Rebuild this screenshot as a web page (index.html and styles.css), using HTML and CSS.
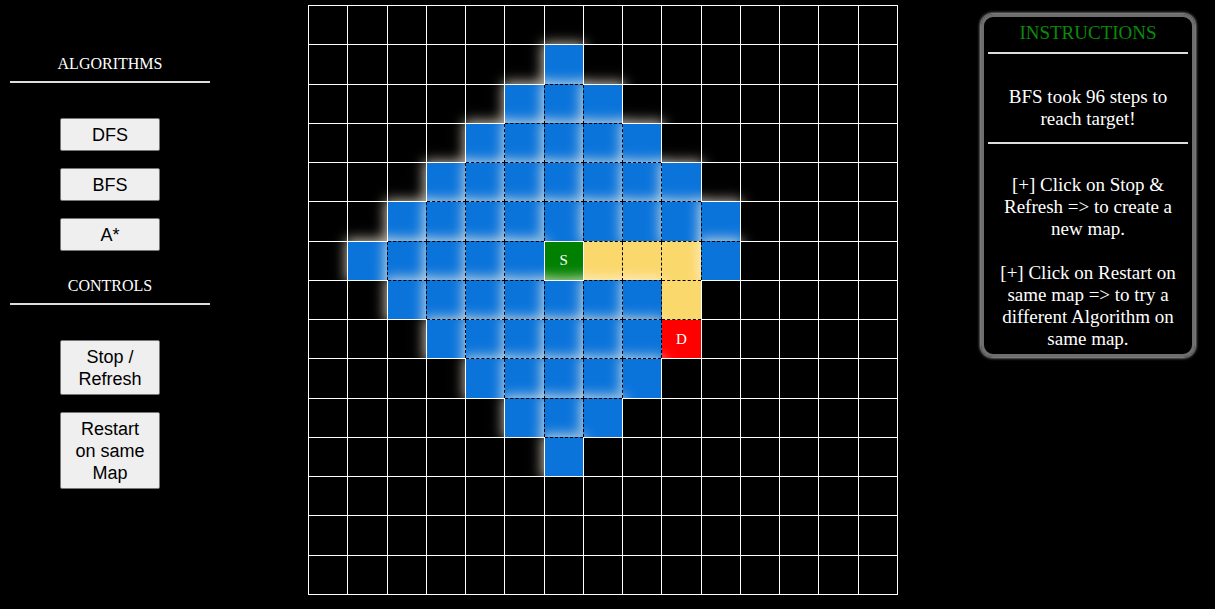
FILE: index.html
```html
<!DOCTYPE html>
<html>
<head>
<meta charset="utf-8">
<title>Pathfinding Visualizer</title>
<link rel="stylesheet" href="styles.css">
</head>
<body>
<div class="page">
  <aside class="side">
    <div class="side-title first">ALGORITHMS</div>
    <hr class="rule">
    <div class="btns">
      <button class="btn">DFS</button>
      <button class="btn">BFS</button>
      <button class="btn">A*</button>
    </div>
    <div class="side-title">CONTROLS</div>
    <hr class="rule">
    <div class="btns">
      <button class="btn">Stop /<br>Refresh</button>
      <button class="btn">Restart<br>on same<br>Map</button>
    </div>
  </aside>

  <table class="grid">
    <tr><td></td><td></td><td></td><td></td><td></td><td></td><td></td><td></td><td></td><td></td><td></td><td></td><td></td><td></td><td></td></tr>
    <tr><td></td><td></td><td></td><td></td><td></td><td></td><td class="v"></td><td></td><td></td><td></td><td></td><td></td><td></td><td></td><td></td></tr>
    <tr><td></td><td></td><td></td><td></td><td></td><td class="v"></td><td class="v"></td><td class="v"></td><td></td><td></td><td></td><td></td><td></td><td></td><td></td></tr>
    <tr><td></td><td></td><td></td><td></td><td class="v"></td><td class="v"></td><td class="v"></td><td class="v"></td><td class="v"></td><td></td><td></td><td></td><td></td><td></td><td></td></tr>
    <tr><td></td><td></td><td></td><td class="v"></td><td class="v"></td><td class="v"></td><td class="v"></td><td class="v"></td><td class="v"></td><td class="v"></td><td></td><td></td><td></td><td></td><td></td></tr>
    <tr><td></td><td></td><td class="v"></td><td class="v"></td><td class="v"></td><td class="v"></td><td class="v"></td><td class="v"></td><td class="v"></td><td class="v"></td><td class="v"></td><td></td><td></td><td></td><td></td></tr>
    <tr><td></td><td class="v"></td><td class="v"></td><td class="v"></td><td class="v"></td><td class="v"></td><td class="s">S</td><td class="p"></td><td class="p"></td><td class="p"></td><td class="v"></td><td></td><td></td><td></td><td></td></tr>
    <tr><td></td><td></td><td class="v"></td><td class="v"></td><td class="v"></td><td class="v"></td><td class="v"></td><td class="v"></td><td class="v"></td><td class="p"></td><td></td><td></td><td></td><td></td><td></td></tr>
    <tr><td></td><td></td><td></td><td class="v"></td><td class="v"></td><td class="v"></td><td class="v"></td><td class="v"></td><td class="v"></td><td class="d">D</td><td></td><td></td><td></td><td></td><td></td></tr>
    <tr><td></td><td></td><td></td><td></td><td class="v"></td><td class="v"></td><td class="v"></td><td class="v"></td><td class="v"></td><td></td><td></td><td></td><td></td><td></td><td></td></tr>
    <tr><td></td><td></td><td></td><td></td><td></td><td class="v"></td><td class="v"></td><td class="v"></td><td></td><td></td><td></td><td></td><td></td><td></td><td></td></tr>
    <tr><td></td><td></td><td></td><td></td><td></td><td></td><td class="v"></td><td></td><td></td><td></td><td></td><td></td><td></td><td></td><td></td></tr>
    <tr><td></td><td></td><td></td><td></td><td></td><td></td><td></td><td></td><td></td><td></td><td></td><td></td><td></td><td></td><td></td></tr>
    <tr><td></td><td></td><td></td><td></td><td></td><td></td><td></td><td></td><td></td><td></td><td></td><td></td><td></td><td></td><td></td></tr>
    <tr><td></td><td></td><td></td><td></td><td></td><td></td><td></td><td></td><td></td><td></td><td></td><td></td><td></td><td></td><td></td></tr>
  </table>

  <section class="info">
    <div class="info-title">INSTRUCTIONS</div>
    <hr class="info-rule">
    <p class="status">BFS took 96 steps to reach target!</p>
    <hr class="info-rule">
    <p class="tip first-tip">[+] Click on Stop &amp; Refresh =&gt; to create a new map.</p>
    <p class="tip">[+] Click on Restart on same map =&gt; to try a different Algorithm on same map.</p>
  </section>
</div>
</body>
</html>
```

FILE: styles.css
```css
html, body {
  margin: 0;
  padding: 0;
  background: #000;
  color: #fff;
  font-family: "Liberation Serif", "Times New Roman", serif;
}

.page {
  display: flex;
  align-items: flex-start;
  padding-top: 5px;
}

.side {
  flex: none;
  width: 220px;
  display: flex;
  flex-direction: column;
  align-items: center;
}

.side-title {
  font-size: 16px;
  line-height: 18px;
  margin-top: 26px;
  text-align: center;
}

.side-title.first {
  margin-top: 50px;
}

.rule {
  width: 200px;
  margin: 8px 0 0 0;
  border: none;
  border-top: 2px solid #ddd;
  height: 0;
}

.btns {
  display: flex;
  flex-direction: column;
  align-items: center;
  gap: 17px;
  margin-top: 35px;
}

.btn {
  width: 100px;
  padding: 4.5px 6px;
  font-family: "Liberation Sans", Arial, sans-serif;
  font-size: 18px;
  line-height: 22px;
  color: #000;
  background: #efefef;
  border: 1px solid #767676;
  border-radius: 2px;
}

.grid {
  flex: none;
  margin-left: 88px;
  border-collapse: collapse;
  table-layout: fixed;
  width: 590px;
  height: 590px;
}

.grid td {
  height: 38px;
  border: 1px solid #fff;
  padding: 0;
  background: #000;
  text-align: center;
  vertical-align: middle;
  font-size: 15px;
  line-height: 15px;
  color: #fff;
}

.grid td.v {
  background: #0b74db;
  border: 1px dashed #000;
  box-shadow: 0 0 12px 2px rgba(255, 246, 228, 0.75);
}

.grid td.p {
  background: #fbd86b;
  border: 1px dashed #000;
}

.grid td.s {
  background: #008000;
  border: 1px solid #fff;
}

.grid td.d {
  background: #ff0000;
  border: 1px dashed #000;
}

.info {
  flex: none;
  width: 200px;
  margin-left: 83px;
  margin-top: 9px;
  padding: 5px 4px 4px 4px;
  border: 3px solid #6e6e6e;
  border-radius: 12px;
  box-shadow: 0 0 3px 1px #bbb;
  text-align: center;
  font-size: 19px;
  line-height: 22px;
}

.info-title {
  color: #0a8a0a;
}

.info-rule {
  margin: 8px 0 0 0;
  border: none;
  border-top: 2px solid #ddd;
  height: 0;
}

.status {
  margin: 32px 0 12px 0;
}

.tip {
  margin: 22px 0 0 0;
}

.tip.first-tip {
  margin-top: 30px;
}
```
